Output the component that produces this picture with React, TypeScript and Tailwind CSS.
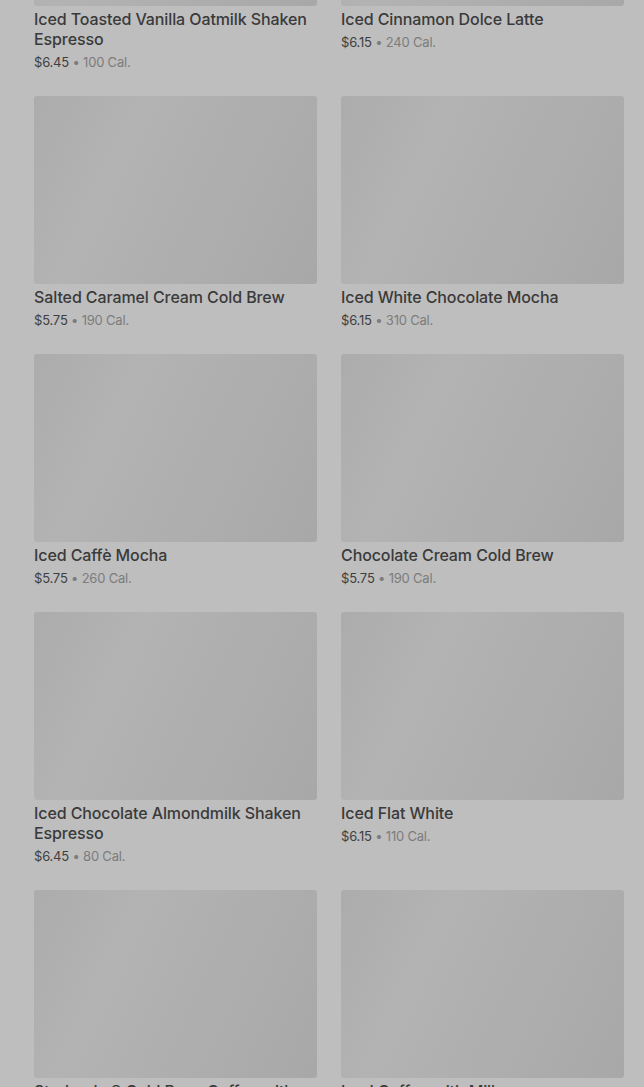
type Item = { name: string; price: string; cal: string };

const items: Item[] = [
  { name: 'Iced Toasted Vanilla Oatmilk Shaken Espresso', price: '$6.45', cal: '100 Cal.' },
  { name: 'Iced Cinnamon Dolce Latte', price: '$6.15', cal: '240 Cal.' },
  { name: 'Salted Caramel Cream Cold Brew', price: '$5.75', cal: '190 Cal.' },
  { name: 'Iced White Chocolate Mocha', price: '$6.15', cal: '310 Cal.' },
  { name: 'Iced Caffè Mocha', price: '$5.75', cal: '260 Cal.' },
  { name: 'Chocolate Cream Cold Brew', price: '$5.75', cal: '190 Cal.' },
  { name: 'Iced Chocolate Almondmilk Shaken Espresso', price: '$6.45', cal: '80 Cal.' },
  { name: 'Iced Flat White', price: '$6.15', cal: '110 Cal.' },
  { name: 'Starbucks® Cold Brew Coffee with Milk', price: '$5.45', cal: '25 Cal.' },
  { name: 'Iced Coffee with Milk', price: '$4.45', cal: '80 Cal.' },
];

function ProductCard({ item }: { item: Item }) {
  return (
    <div className="flex flex-col">
      {/* image placeholder */}
      <div className="h-[188px] w-full rounded-[3px] bg-linear-115 from-[#acacac] via-[#b3b3b3] via-30% to-[#a8a8a8]" />
      <h3 className="mt-[3px] text-[16px] leading-5 font-medium tracking-[-0.1px] text-[#3a3a3a]">
        {item.name}
      </h3>
      <p className="mt-1 text-[13px] leading-[18px] tracking-[-0.2px]">
        <span className="text-[#3e3e3e]">{item.price}</span>
        <span className="text-[#7c7c7c]"> • {item.cal}</span>
      </p>
    </div>
  );
}

export default function App() {
  return (
    <div className="h-[1087px] overflow-hidden bg-[#bebebe] font-['Inter',sans-serif]">
      <div className="mt-[-182px] grid grid-cols-2 gap-x-6 gap-y-[25px] pl-[34px] pr-5">
        {items.map((item) => (
          <ProductCard key={item.name} item={item} />
        ))}
      </div>
    </div>
  );
}
